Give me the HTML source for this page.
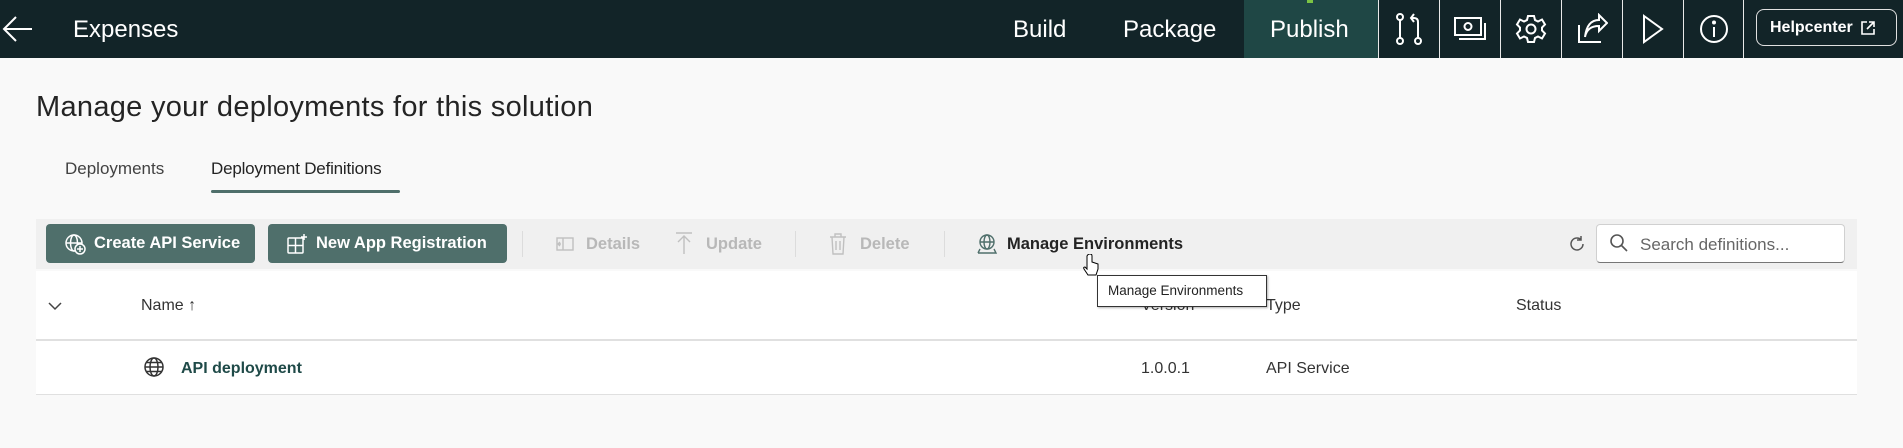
<!DOCTYPE html>
<html><head><meta charset="utf-8"><style>
*{box-sizing:border-box;margin:0;padding:0}
body{width:1903px;height:448px;background:#f9f9f9;font-family:"Liberation Sans",sans-serif;position:relative;overflow:hidden;color:#242424}
.abs{position:absolute}
.hdr{left:0;top:0;width:1903px;height:58px;background:#122428}
.ht{color:#fff;font-size:24px;top:16px}
.ib{top:0;width:61px;height:58px;border-left:1.5px solid #e8e8e8;display:flex;align-items:center;justify-content:center}
.tb{left:36px;top:219px;width:1821px;height:50px;background:#f0f0f0}
.btn{top:224px;height:39px;background:#4f6f6b;border-radius:4px;color:#fff;font-size:16.5px;font-weight:bold;display:flex;align-items:center;padding-left:18px;gap:8px}
.dis{color:#b8b8b8;font-size:16.5px;top:235px;font-weight:bold}
.sep{top:231px;width:1px;height:26px;background:#dcdcdc}
.th{font-size:16px;top:297px;color:#333}
.td{font-size:16px;top:360px;color:#333}
</style></head><body>
<div class="abs hdr"></div>
<svg class="abs" style="left:2px;top:14px" width="32" height="30" viewBox="0 0 32 30"><path d="M30 15H3M14 3L2 15l12 12" stroke="#fff" stroke-width="2" fill="none"/></svg>
<div class="abs ht" style="left:73px">Expenses</div>
<div class="abs ht" style="left:1013px">Build</div>
<div class="abs ht" style="left:1123px">Package</div>
<div class="abs" style="left:1244px;top:0;width:134px;height:58px;background:#1f4745"></div>
<div class="abs ht" style="left:1270px">Publish</div>
<div class="abs" style="left:1307px;top:0;width:6px;height:3px;background:#7cc444"></div>
<div class="abs ib" style="left:1378px"><svg width="30" height="34" viewBox="0 0 30 34" fill="none" stroke="#fff" stroke-width="2"><circle cx="6" cy="5" r="3"/><circle cx="6" cy="29" r="3"/><circle cx="24" cy="29" r="3"/><path d="M6 8v18M24 26V10q0-4-4-4h-2M20 2l-3 4 3 4"/></svg></div>
<div class="abs ib" style="left:1439px"><svg width="34" height="28" viewBox="0 0 34 28" fill="none" stroke="#fff" stroke-width="2"><rect x="2" y="3" width="26" height="17"/><circle cx="15" cy="11.5" r="3.5"/><path d="M6 24h26V8"/></svg></div>
<div class="abs ib" style="left:1500px"><svg width="32" height="32" viewBox="0 0 32 32" fill="none" stroke="#fff" stroke-width="2"><path d="M13 3h6l1 4 3 1.5 4-2 3 5-3 3v3l3 3-3 5-4-2-3 1.5-1 4h-6l-1-4-3-1.5-4 2-3-5 3-3v-3l-3-3 3-5 4 2 3-1.5z"/><circle cx="16" cy="16" r="4.5"/></svg></div>
<div class="abs ib" style="left:1561px"><svg width="32" height="32" viewBox="0 0 32 32" fill="none" stroke="#fff" stroke-width="2"><path d="M3 12v17h22M9 24q2-11 14-11v5l8-8-8-8v5Q11 7 9 24z"/></svg></div>
<div class="abs ib" style="left:1622px"><svg width="24" height="32" viewBox="0 0 24 32" fill="none" stroke="#fff" stroke-width="2"><path d="M3 3l18 13L3 29z"/></svg></div>
<div class="abs ib" style="left:1683px;border-right:1.5px solid #e8e8e8"><svg width="32" height="32" viewBox="0 0 32 32" fill="none" stroke="#fff" stroke-width="2"><circle cx="16" cy="16" r="13"/><path d="M16 14v10"/><circle cx="16" cy="9.5" r="1" fill="#fff"/></svg></div>
<div class="abs" style="left:1756px;top:9px;width:141px;height:37px;border:1.5px solid #e0e0e0;border-radius:8px;color:#fff;font-size:16px;font-weight:bold;display:flex;align-items:center;padding-left:13px;gap:8px">Helpcenter <svg width="14" height="14" viewBox="0 0 14 14" fill="none" stroke="#fff" stroke-width="1.6"><path d="M6 1H1v12h12V8M8 1h5v5M13 1L6 8"/></svg></div>

<div class="abs" style="left:36px;top:91px;font-size:29px;color:#242424;letter-spacing:0.3px">Manage your deployments for this solution</div>
<div class="abs" style="left:65px;top:159px;font-size:17px;color:#424242">Deployments</div>
<div class="abs" style="left:211px;top:159px;font-size:17px;color:#242424;letter-spacing:-0.2px">Deployment Definitions</div>
<div class="abs" style="left:211px;top:190px;width:189px;height:3px;background:#4f6f6b;border-radius:2px"></div>

<div class="abs tb"></div>
<div class="abs btn" style="left:46px;width:209px"><svg width="22" height="22" viewBox="0 0 22 22" fill="none" stroke="#fff" stroke-width="1.5"><circle cx="10" cy="10" r="8"/><ellipse cx="10" cy="10" rx="3.5" ry="8"/><path d="M2 10h16"/><circle cx="16" cy="16" r="5" fill="#4f6f6b"/><path d="M16 13v6M13 16h6"/></svg>Create API Service</div>
<div class="abs btn" style="left:268px;width:239px"><svg width="22" height="22" viewBox="0 0 22 22" fill="none" stroke="#fff" stroke-width="1.5"><rect x="2" y="5" width="15" height="15" rx="1"/><path d="M9.5 5v15M2 12.5h15M18 1v6M15 4h6"/></svg>New App Registration</div>
<div class="abs sep" style="left:522px"></div>
<svg class="abs" style="left:555px;top:234px" width="20" height="20" viewBox="0 0 20 20" fill="none" stroke="#c0c0c0" stroke-width="1.4"><rect x="2" y="4" width="16" height="12"/><path d="M8 4v12M6 10H3M5 8l-2 2 2 2"/></svg>
<div class="abs dis" style="left:586px">Details</div>
<svg class="abs" style="left:674px;top:231px" width="20" height="24" viewBox="0 0 20 24" fill="none" stroke="#c0c0c0" stroke-width="1.4"><path d="M2 2h16M10 5v18M4 11l6-6 6 6"/></svg>
<div class="abs dis" style="left:706px">Update</div>
<div class="abs sep" style="left:795px"></div>
<svg class="abs" style="left:828px;top:232px" width="20" height="24" viewBox="0 0 20 24" fill="none" stroke="#c0c0c0" stroke-width="1.4"><path d="M2 5h16M7 5V2h6v3M4 5l1 17h10l1-17M8 9v9M12 9v9"/></svg>
<div class="abs dis" style="left:860px">Delete</div>
<div class="abs sep" style="left:944px"></div>
<svg class="abs" style="left:976px;top:233px" width="22" height="22" viewBox="0 0 22 22" fill="none" stroke="#4f6f6b" stroke-width="1.4"><circle cx="11" cy="9" r="7"/><ellipse cx="11" cy="9" rx="3" ry="7"/><path d="M4 9h14M2 20h18l-2-4M4 16l-2 4"/></svg>
<div class="abs" style="left:1007px;top:235px;font-size:16.5px;font-weight:bold;color:#242424">Manage Environments</div>
<svg class="abs" style="left:1567px;top:234px" width="20" height="20" viewBox="0 0 20 20" fill="none" stroke="#555" stroke-width="1.5"><path d="M16 10a6 6 0 1 1-2-4.5M14 2v4h-4"/></svg>
<div class="abs" style="left:1596px;top:224px;width:249px;height:39px;background:#fff;border:1px solid #d0d0d0;border-bottom-color:#777;border-radius:4px"></div>
<svg class="abs" style="left:1609px;top:233px" width="20" height="20" viewBox="0 0 20 20" fill="none" stroke="#555" stroke-width="1.6"><circle cx="8" cy="8" r="6"/><path d="M12.5 12.5L18 18"/></svg>
<div class="abs" style="left:1640px;top:235px;font-size:17px;color:#666">Search definitions...</div>

<div class="abs" style="left:36px;top:271px;width:1821px;height:124px;background:#fff;border-bottom:1.5px solid #e0e0e0"></div>
<div class="abs" style="left:36px;top:339px;width:1821px;height:1.5px;background:#e0e0e0"></div>
<svg class="abs" style="left:47px;top:300px" width="16" height="12" viewBox="0 0 16 12" fill="none" stroke="#444" stroke-width="1.5"><path d="M2 3l6 6 6-6"/></svg>
<div class="abs th" style="left:141px">Name ↑</div>
<div class="abs th" style="left:1141px">Version</div>
<div class="abs th" style="left:1266px">Type</div>
<div class="abs th" style="left:1516px">Status</div>
<svg class="abs" style="left:143px;top:356px" width="22" height="22" viewBox="0 0 22 22" fill="none" stroke="#333" stroke-width="1.5"><circle cx="11" cy="11" r="9"/><ellipse cx="11" cy="11" rx="4" ry="9"/><path d="M2 11h18M3.5 6.5h15M3.5 15.5h15"/></svg>
<div class="abs td" style="left:181px;font-weight:bold;color:#1f4a48">API deployment</div>
<div class="abs td" style="left:1141px">1.0.0.1</div>
<div class="abs td" style="left:1266px">API Service</div>

<div class="abs" style="left:1097px;top:275px;width:170px;height:32px;background:#fff;border:1px solid #333;box-shadow:1px 1px 2px rgba(0,0,0,.3);font-size:13.5px;color:#222;padding:7px 0 0 10px">Manage Environments</div>
<svg class="abs" style="left:1082px;top:254px" width="18" height="24" viewBox="0 0 18 24"><path d="M5 2v13l-2-2q-2 0-1 2l4 6h8l2-6v-5l-3-1-3-1V2q0-2-2-2t-3 2z" fill="#fff" stroke="#000" stroke-width="1"/></svg>
</body></html>
